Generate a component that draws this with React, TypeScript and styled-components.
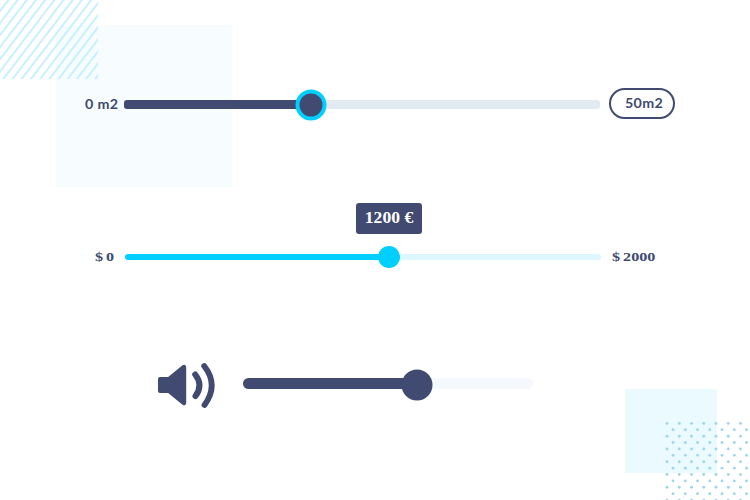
import React from "react";
import styled, { createGlobalStyle } from "styled-components";

const navy = "#414a70";
const cyan = "#00cfff";

const GlobalStyle = createGlobalStyle`
  body { margin: 0; background: #fff; }
`;

const Page = styled.main`
  position: relative;
  box-sizing: border-box;
  width: 750px;
  height: 500px;
  padding-top: 88px;
  overflow: hidden;
  background: #fff;
  color: ${navy};
`;

const Backdrop = styled.div<{ $x: number; $y: number; $w: number; $h: number; $color: string }>`
  position: absolute;
  left: ${(p) => p.$x}px;
  top: ${(p) => p.$y}px;
  width: ${(p) => p.$w}px;
  height: ${(p) => p.$h}px;
  background: ${(p) => p.$color};
`;

const Pattern = styled.svg<{ $x: number; $y: number }>`
  position: absolute;
  left: ${(p) => p.$x}px;
  top: ${(p) => p.$y}px;
`;

const Row = styled.section<{ $height: number; $left: number; $gapAbove?: number }>`
  position: relative;
  display: flex;
  align-items: center;
  height: ${(p) => p.$height}px;
  margin-top: ${(p) => p.$gapAbove ?? 0}px;
  padding-left: ${(p) => p.$left}px;
`;

const SansLabel = styled.span<{ $width?: number }>`
  flex: none;
  width: ${(p) => (p.$width ? `${p.$width}px` : "auto")};
  font: 700 13px/16px Lato, sans-serif;
  letter-spacing: 0.3px;
  white-space: nowrap;
  transform: scaleX(1.1);
  transform-origin: left center;
`;

const SerifLabel = styled.span<{ $width: number }>`
  flex: none;
  width: ${(p) => p.$width}px;
  font: 700 13px/16px "Liberation Serif", serif;
  word-spacing: -0.8px;
  white-space: nowrap;
  transform: scaleX(1.24);
  transform-origin: left center;
`;

const Pill = styled.div`
  display: flex;
  align-items: center;
  box-sizing: border-box;
  width: 66px;
  height: 31px;
  margin-left: 9px;
  padding: 0 0 1px 14px;
  border: 2px solid ${navy};
  border-radius: 16px;
  background: #fff;
`;

const Track = styled.div<{ $width: number; $height: number; $radius: number; $color: string; $drop?: number }>`
  position: relative;
  flex: none;
  width: ${(p) => p.$width}px;
  height: ${(p) => p.$height}px;
  margin-top: ${(p) => p.$drop ?? 0}px;
  border-radius: ${(p) => p.$radius}px;
  background: ${(p) => p.$color};
`;

const Fill = styled.div<{ $width: number; $color: string }>`
  width: ${(p) => p.$width}px;
  height: 100%;
  border-radius: inherit;
  background: ${(p) => p.$color};
`;

const Knob = styled.div<{ $at: number; $size: number; $color: string; $ring?: number; $drop?: number }>`
  position: absolute;
  left: ${(p) => p.$at}px;
  top: calc(50% + ${(p) => p.$drop ?? 0}px);
  box-sizing: border-box;
  width: ${(p) => p.$size}px;
  height: ${(p) => p.$size}px;
  border: ${(p) => p.$ring ?? 0}px solid ${cyan};
  border-radius: 50%;
  background: ${(p) => p.$color};
  transform: translate(-50%, -50%);
`;

const Tooltip = styled.div`
  position: absolute;
  left: 231px;
  bottom: 26px;
  width: 66px;
  height: 31px;
  border-radius: 3px;
  background: ${navy};
  color: #fff;
  font: 700 16px/30px "Liberation Serif", serif;
  text-align: center;
  white-space: nowrap;
`;

const TooltipText = styled.span`
  display: inline-block;
  transform: scaleX(1.1);
`;

const VolumeIcon = styled.svg`
  flex: none;
  width: 60px;
  height: 48px;
  margin: 4px 25px 0 0;
`;

const stripes = Array.from({ length: 17 }, (_, i) => 8.4 + i * 9.2);
const dots = Array.from({ length: 13 }, (_, row) =>
  Array.from({ length: 7 }, (_, col) => ({
    x: 2 + col * 12.25 + (row % 2) * 6.05,
    y: 2.4 + row * 6.39,
  }))
).flat();

export default function App() {
  return (
    <>
      <GlobalStyle />
      <Page>
        <Backdrop $x={56} $y={25} $w={176} $h={162} $color="#f7fdff" />
        <Pattern $x={0} $y={0} width="98" height="79" aria-hidden="true">
          {stripes.map((x) => (
            <path key={x} d={`M${x + 1.5} -2L${x - 61.8} 81`} stroke="#c8f0ff" strokeWidth="2" />
          ))}
        </Pattern>
        <Backdrop $x={625} $y={389} $w={92} $h={84} $color="#eafaff" />
        <Pattern $x={665} $y={421} width="83" height="79" aria-hidden="true">
          {dots.map((d) => (
            <circle key={`${d.x}-${d.y}`} cx={d.x} cy={d.y} r="1.45" fill="#9fd6ea" />
          ))}
        </Pattern>

        <Row $height={31} $left={84.6}>
          <SansLabel $width={39}>0 m2</SansLabel>
          <Track $width={476} $height={9} $radius={3} $drop={2} $color="#e2eaf2">
            <Fill $width={187} $color={navy} />
            <Knob $at={187.5} $size={31} $ring={4} $drop={0.5} $color={navy} />
          </Track>
          <Pill>
            <SansLabel>50m2</SansLabel>
          </Pill>
        </Row>

        <Row $height={22} $left={94.6} $gapAbove={127}>
          <SerifLabel $width={30.4}>$ 0</SerifLabel>
          <Track $width={476} $height={6} $radius={3} $color="#dcf7ff">
            <Fill $width={264} $color={cyan} />
            <Knob $at={264} $size={22} $color={cyan} />
            <Tooltip>
              <TooltipText>1200 €</TooltipText>
            </Tooltip>
          </Track>
          <Row as="div" $height={16} $left={10.6}>
            <SerifLabel $width={50}>$ 2000</SerifLabel>
          </Row>
        </Row>

        <Row $height={47} $left={158} $gapAbove={92}>
          <VolumeIcon viewBox="0 0 60 48" fill={navy} stroke={navy} aria-label="Volume">
            <path
              d="M2 16.5H10.8L25.5 4.4Q26.7 3.6 26.7 5.5V40.5Q26.7 42.4 25.5 41.6L10.8 29.5H2Q1.5 29.5 1.5 29V17Q1.5 16.5 2 16.5Z"
              strokeWidth="3"
              strokeLinejoin="round"
            />
            <path d="M37.2 12.5Q45.6 23 37.5 34" fill="none" strokeWidth="6" strokeLinecap="round" />
            <path d="M46.2 4Q61.1 23 46.5 43" fill="none" strokeWidth="5.8" strokeLinecap="round" />
          </VolumeIcon>
          <Track $width={290} $height={11} $radius={5.5} $color="#f5f8fc">
            <Fill $width={174} $color={navy} />
            <Knob $at={174} $size={31} $drop={1.5} $color={navy} />
          </Track>
        </Row>
      </Page>
    </>
  );
}
